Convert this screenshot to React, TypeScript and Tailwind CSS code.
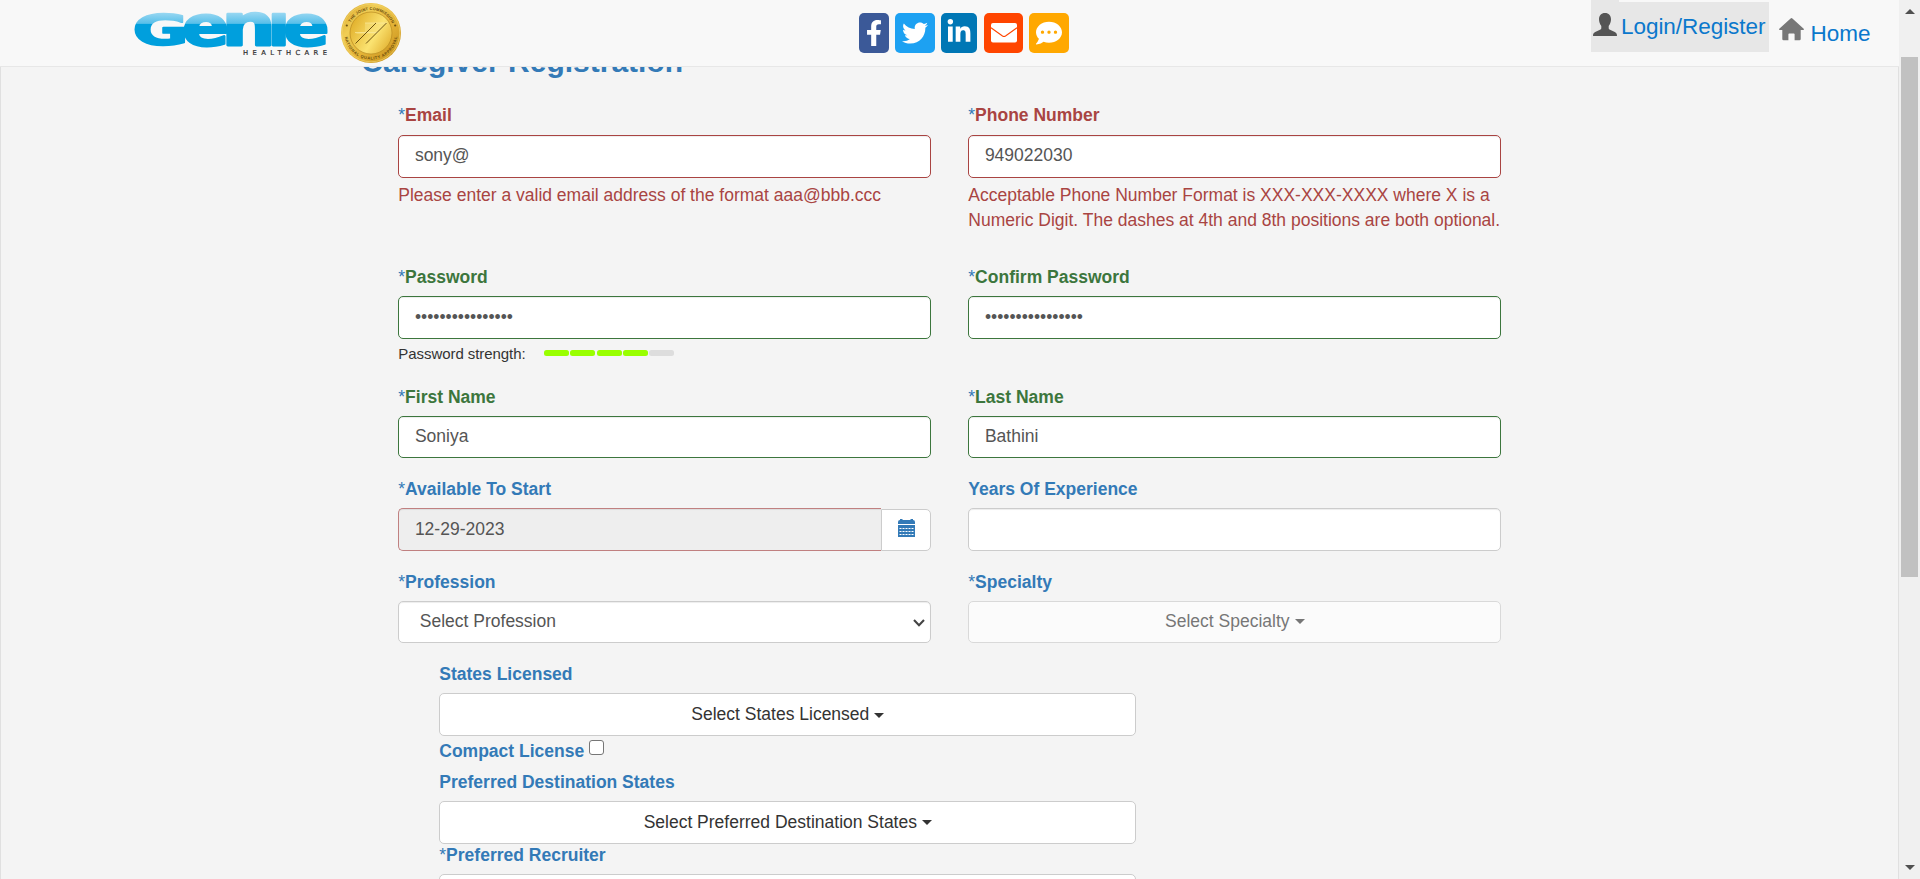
import type { ReactNode } from "react";
import { FaFacebookF, FaTwitter, FaLinkedinIn, FaCommentDots } from "react-icons/fa";

type Tone = "error" | "ok" | "plain";

const labelTone: Record<Tone, string> = {
  error: "text-[#a94442]",
  ok: "text-[#3c763d]",
  plain: "text-[#337ab7]",
};
const borderTone: Record<Tone, string> = {
  error: "border-[#a94442]",
  ok: "border-[#3c763d]",
  plain: "border-[#ccc]",
};

function Label({ text, tone = "plain", required = true }: { text: string; tone?: Tone; required?: boolean }) {
  return (
    <div className={`h-[25px] whitespace-nowrap ${tone === "error" ? "mb-[7.25px]" : "mb-[6.25px]"}`}>
      {required && <span className="text-[#337ab7]">*</span>}
      <span className={`font-bold ${labelTone[tone]}`}>{text}</span>
    </div>
  );
}

function Box({ value, tone = "plain", className = "pt-[7.25px]" }: { value: string; tone?: Tone; className?: string }) {
  return (
    <div
      className={`h-[42.5px] rounded-[5px] border bg-white pl-[15.6px] text-[#555] shadow-[inset_0_1px_1px_rgba(0,0,0,0.075)] ${borderTone[tone]} ${className}`}
    >
      {value}
    </div>
  );
}

function Field({ label, value, tone = "plain", required = true, boxClass, children }: { label: string; value: string; tone?: Tone; required?: boolean; boxClass?: string; children?: ReactNode }) {
  return (
    <div className="w-[533px]">
      <Label text={label} tone={tone} required={required} />
      <Box value={value} tone={tone} className={boxClass} />
      {children}
    </div>
  );
}

function Row({ className, children }: { className: string; children: ReactNode }) {
  return <div className={`flex gap-[37px] ${className}`}>{children}</div>;
}

function DropButton({ text, className = "" }: { text: string; className?: string }) {
  return (
    <div className={`flex h-[42.5px] items-center justify-center rounded-[5px] border border-[#ccc] bg-white text-[#333] ${className}`}>
      <span>{text}</span>
      <span className="mt-[1px] ml-[5px] h-0 w-0 border-x-[5px] border-t-[5px] border-x-transparent border-t-current" />
    </div>
  );
}

function Strength() {
  return (
    <div className="mt-[4.500px] flex h-[22px] items-start text-[15px] leading-[22px] tracking-[-0.06px] text-[#333]">
      <span className="w-[146px]">Password strength:</span>
      <div className="mt-[7px] flex gap-[1.2px]">
        {[0, 1, 2, 3, 4].map((i) => (
          <span key={i} className={`h-[6px] w-[25px] rounded-[2.5px] ${i < 4 ? "bg-[#99ff00]" : "bg-[#ddd]"}`} />
        ))}
      </div>
    </div>
  );
}

const logoLetters = [
  { ch: "G", x: 1, w: 48, left: 5.1, glyph: 70, height: 74.2 },
  { ch: "e", x: 50, w: 41, left: 4.2, glyph: 58.8, height: 57.5 },
  { ch: "n", x: 93, w: 42, left: 8.4, glyph: 55, height: 56 },
  { ch: "ı", x: 138, w: 11.5, left: 8.4, glyph: 17.5, height: 54.7 },
  { ch: "e", x: 151, w: 40, left: 4.2, glyph: 58.8, height: 57.5 },
];

function Logo() {
  return (
    <svg width="194" height="46" viewBox="0 0 194 46" className="mt-[11px] overflow-visible">
      <defs>
        {logoLetters.map((l, i) => (
          <linearGradient key={i} id={`glossy${i}`} gradientUnits="userSpaceOnUse" x1="0" x2="0" y1={-l.height} y2="0">
            <stop offset="0" stopColor="#97d7f2" />
            <stop offset="0.33" stopColor="#58bfe9" />
            <stop offset="0.36" stopColor="#009fdd" />
            <stop offset="1" stopColor="#009fdd" />
          </linearGradient>
        ))}
      </defs>
      {logoLetters.map((l, i) => (
        <g key={i} transform={`translate(${l.x} 33.5) scale(${l.w / l.glyph} ${31.5 / l.height}) translate(${-l.left} 0)`}>
          <text fontFamily="DejaVu Sans" fontWeight="700" fontSize="100" fill={`url(#glossy${i})`} stroke={`url(#glossy${i})`} strokeWidth="4" strokeLinejoin="round">
            {l.ch}
          </text>
        </g>
      ))}
      <text x="108" y="43.5" fontFamily="DejaVu Sans" fontSize="6.8" fill="#333" stroke="#333" strokeWidth="0.2" textLength="84" lengthAdjust="spacing">
        HEALTHCARE
      </text>
    </svg>
  );
}

function Seal() {
  return (
    <svg width="60" height="60" viewBox="0 0 60 60" className="mt-[3px] ml-[12px]">
      <defs>
        <linearGradient id="rim" x1="0" y1="0" x2="1" y2="1">
          <stop offset="0" stopColor="#d6a32a" />
          <stop offset="0.3" stopColor="#f0cd55" />
          <stop offset="0.6" stopColor="#e3b236" />
          <stop offset="1" stopColor="#c08a17" />
        </linearGradient>
        <linearGradient id="face" x1="0" y1="0.2" x2="1" y2="0.8">
          <stop offset="0" stopColor="#dfac26" />
          <stop offset="0.6" stopColor="#fbe371" />
          <stop offset="1" stopColor="#e2b030" />
        </linearGradient>
        <path id="arcTop" d="M7 30A23 23 0 0 1 53 30" />
        <path id="arcBottom" d="M3.5 30A26.5 26.5 0 0 0 56.5 30" />
      </defs>
      <circle cx="30" cy="30" r="30" fill="url(#rim)" />
      <circle cx="30" cy="30" r="28.8" fill="none" stroke="#f0d26a" strokeWidth="0.7" />
      <circle cx="30" cy="30" r="21" fill="url(#face)" stroke="#b88a20" strokeWidth="0.7" />
      <path d="M24 20H46L36 31H14L19 29H24Z" fill="#f9e584" opacity="0.45" />
      <path d="M24 20H46M14 29.5H37" stroke="#f9e9a0" strokeWidth="0.7" fill="none" />
      <path d="M14.5 40.5L35 20M25 40.5L45.5 20" stroke="#5e4308" strokeWidth="0.9" fill="none" />
      <circle cx="5.8" cy="22.5" r="1.1" fill="#6e5111" />
      <circle cx="54.2" cy="22.5" r="1.1" fill="#6e5111" />
      <text fontFamily="Liberation Sans" fontWeight="700" fontSize="4" fill="#6a4c0c">
        <textPath href="#arcTop" startOffset="11" textLength="51">THE JOINT COMMISSION</textPath>
      </text>
      <text fontFamily="Liberation Sans" fontWeight="700" fontSize="4" fill="#6a4c0c">
        <textPath href="#arcBottom" startOffset="4" textLength="75">NATIONAL QUALITY APPROVAL</textPath>
      </text>
    </svg>
  );
}

function Header() {
  return (
    <header className="relative z-10 flex h-[67px] w-[1899px] border-b border-[#e7e7e7] bg-[#f8f8f8]">
      <div className="flex w-[859px] pl-[135px]">
        <Logo />
        <Seal />
      </div>
      <div className="mt-[13px] flex h-[40px] w-[732px] text-white">
        <span className="flex w-[30px] items-center justify-center rounded-[5px] bg-[#3b5998]">
          <FaFacebookF size={26} />
        </span>
        <span className="ml-[6px] flex w-[40px] items-center justify-center rounded-[5px] bg-[#1da1f2]">
          <FaTwitter size={26} />
        </span>
        <span className="ml-[6px] flex w-[36px] items-center justify-center rounded-[5px] bg-[#0077b5] pb-[3px]">
          <FaLinkedinIn size={26} />
        </span>
        <span className="ml-[7px] flex w-[39px] items-center justify-center rounded-[5px] bg-[#ff4500] pb-[1px]">
          <svg width="26" height="20" viewBox="0 0 26 20">
            <rect width="26" height="19.5" rx="2" fill="#fff" />
            <path d="M0 4.800L11.500 13Q13 14 14.500 13L26 4.800" fill="none" stroke="#ff4500" strokeWidth="1.1" />
          </svg>
        </span>
        <span className="ml-[6px] flex w-[40px] items-center justify-center rounded-[5px] bg-[#ffa800]">
          <FaCommentDots size={26} />
        </span>
      </div>
      <nav className="flex text-[22.5px] leading-[32px] text-[#0b78cc]">
        <div>
          <div className="h-[2px] w-[28px] bg-[#e7e7e7]" />
          <div className="flex h-[50px] w-[178px] bg-[#e7e7e7] pt-[9px] pl-[2px]">
            <svg width="24" height="24" viewBox="0 0 24 24" className="mt-[2px] mr-[4px] shrink-0" fill="#555">
              <path d="M12 0C15.8 0 18 2.700 18 6.300C18 8.600 17.200 11.300 15.700 13V15C15.700 16 16.200 16.400 17 16.800L21.800 19.100C23.400 20 24 21 24 23H0C0 21 .6 20 2.200 19.100L7 16.800C7.800 16.400 8.300 16 8.300 15V13C6.800 11.300 6 8.600 6 6.300C6 2.700 8.200 0 12 0Z" />
            </svg>
            <span className="tracking-[-0.05px]">Login/Register</span>
          </div>
        </div>
        <div className="flex pt-[18px] pl-[10px]">
          <svg width="25" height="23" viewBox="0 0 25 23" className="mr-[6.500px]" fill="#777">
            <path d="M11.600 .4Q12.500 -.3 13.400 .4L24.700 10.800Q25.300 11.700 24.300 12H21.700V21Q21.700 22.300 20.400 22.300H15.600V16.300Q15.600 15.500 14.800 15.500H10.200Q9.400 15.500 9.400 16.300V22.300H4.600Q3.300 22.300 3.300 21V12H.7Q-.3 11.700 .3 10.800Z" />
          </svg>
          <span>Home</span>
        </div>
      </nav>
    </header>
  );
}

function Scrollbar() {
  return (
    <div className="flex h-full w-[21px] shrink-0 flex-col items-center bg-[#f0f0f0]">
      <div className="mt-[9px] h-0 w-0 border-x-[5px] border-b-[5px] border-x-transparent border-b-[#505050]" />
      <div className="mt-[43px] h-[520px] w-[17px] bg-[#c1c1c1]" />
      <div className="mt-auto mb-[9px] h-0 w-0 border-x-[5px] border-t-[5px] border-x-transparent border-t-[#505050]" />
    </div>
  );
}

function CalendarGlyph() {
  return (
    <svg width="17" height="18" viewBox="0 0 17 18" fill="#337ab7">
      <path d="M0 5V3Q0 1 2 1V0H4.500V1H12.500V0H15V1Q17 1 17 3V5Z" />
      <path d="M0 6H17V18H0Z" />
      <path d="M1.500 9.500H15.500M1.500 12.500H15.500M1.500 15.500H15.500" stroke="#fff" strokeWidth="1" strokeDasharray="2 1" />
    </svg>
  );
}

export default function App() {
  return (
    <div className="flex h-[879px] w-[1920px] overflow-hidden bg-[#f4f4f4] font-['Liberation_Sans',Arial,sans-serif] text-[17.5px] leading-[25px]">
      <div className="h-full w-[1899px] shrink-0">
        <Header />
        <main className="h-[812px] overflow-hidden border-x border-[#e0e0e0] pl-[397.3px]">
          <h1 className="-mt-[22px] -ml-[37px] h-[33px] text-[30px] leading-[33px] font-bold text-[#337ab7]">Caregiver Registration</h1>
          <Row className="mt-[25px] h-[162px]">
            <Field label="Email" value="sony@" tone="error" boxClass="pt-[6.75px]">
              <p className="mt-[5px] whitespace-nowrap text-[#a94442]">Please enter a valid email address of the format aaa@bbb.ccc</p>
            </Field>
            <Field label="Phone Number" value="949022030" tone="error" boxClass="pt-[6.75px]">
              <p className="mt-[5px] whitespace-nowrap text-[#a94442]">
                Acceptable Phone Number Format is XXX-XXX-XXXX where X is a
                <br />
                Numeric Digit. The dashes at 4th and 8th positions are both optional.
              </p>
            </Field>
          </Row>
          <Row className="h-[119.6px]">
            <Field label="Password" value="••••••••••••••••" tone="ok" boxClass="pt-[7.75px]">
              <Strength />
            </Field>
            <Field label="Confirm Password" value="••••••••••••••••" tone="ok" boxClass="pt-[7.75px]" />
          </Row>
          <Row className="h-[92.5px]">
            <Field label="First Name" value="Soniya" tone="ok" />
            <Field label="Last Name" value="Bathini" tone="ok" />
          </Row>
          <Row className="h-[92.5px]">
            <div className="w-[533px]">
              <Label text="Available To Start" />
              <div className="flex">
                <div className="h-[42.5px] w-[483px] rounded-l-[5px] border border-r-0 border-[#c08080] bg-[#eee] pt-[7.25px] pl-[15.6px] text-[#555] shadow-[inset_0_1px_1px_rgba(0,0,0,0.075)]">
                  12-29-2023
                </div>
                <div className="mt-[1px] flex h-[41.5px] w-[50px] items-center justify-center rounded-r-[5px] border border-[#ccc] bg-white pb-[5px]">
                  <CalendarGlyph />
                </div>
              </div>
            </div>
            <Field label="Years Of Experience" value="" required={false} />
          </Row>
          <Row className="h-[92.5px]">
            <div className="w-[533px]">
              <Label text="Profession" />
              <div className="flex h-[42.5px] items-center justify-between rounded-[5px] border border-[#ccc] bg-white pr-[5px] pl-[20.500px] text-[#555] shadow-[inset_0_1px_1px_rgba(0,0,0,0.075)]">
                <span className="-mt-[1px]">Select Profession</span>
                <svg width="12" height="8" viewBox="0 0 12 8" className="mt-[2px]">
                  <path d="M1 1L6 6.200L11 1" fill="none" stroke="#444" strokeWidth="2.100" />
                </svg>
              </div>
            </div>
            <div className="w-[533px]">
              <Label text="Specialty" />
              <DropButton text="Select Specialty" className="pb-[1.500px] opacity-65" />
            </div>
          </Row>
          <section className="ml-[41px] w-[697px]">
            <Label text="States Licensed" required={false} />
            <DropButton text="Select States Licensed" />
            <div className="mt-[3px] flex h-[31px]">
              <span className="font-bold text-[#337ab7]">Compact License</span>
              <span className="mt-[1.500px] ml-[5px] h-[15px] w-[15px] rounded-[3px] border border-[#767676] bg-white" />
            </div>
            <Label text="Preferred Destination States" required={false} />
            <DropButton text="Select Preferred Destination States" />
            <div className="-mt-[0.6px]">
              <Label text="Preferred Recruiter" />
            </div>
            <DropButton text="" />
          </section>
        </main>
      </div>
      <Scrollbar />
    </div>
  );
}
